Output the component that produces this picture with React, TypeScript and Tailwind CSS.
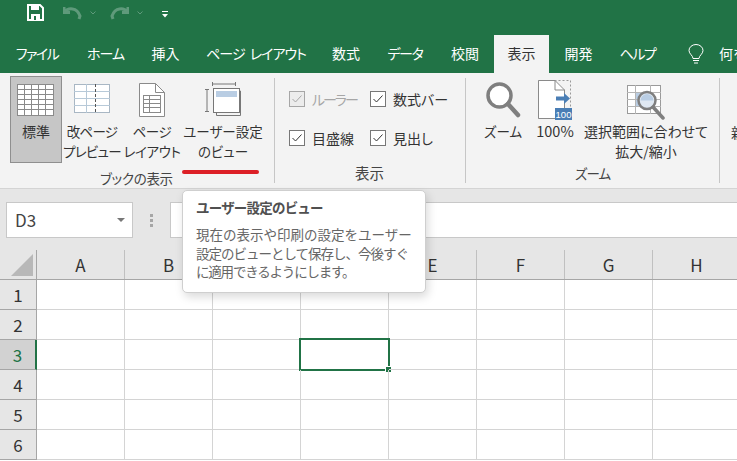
const tabs = [
  { label: "ファイル", w: "w-[74px] tracking-[-1.5px]" },
  { label: "ホーム", w: "w-[63px] tracking-[-1px]" },
  { label: "挿入", w: "w-[57px] text-[14.5px]" },
  { label: "ページ レイアウト", w: "w-[124px] tracking-[-1px] [word-spacing:3px]" },
  { label: "数式", w: "w-[56px] text-[14.5px]" },
  { label: "データ", w: "w-[62px] tracking-[-1.3px]" },
  { label: "校閲", w: "w-[58px] text-[14.5px]" },
  { label: "表示", w: "w-[55px] text-[14.5px]", active: true },
  { label: "開発", w: "w-[59px] text-[14.5px]" },
  { label: "ヘルプ", w: "w-[59px] tracking-[-1.5px]" },
];

const columns = ["A", "B", "C", "D", "E", "F", "G", "H"];
const rows = [1, 2, 3, 4, 5, 6];

const GridIcon = () => (
  <svg width="38" height="33" viewBox="0 0 38 33" fill="none">
    <rect x="0.5" y="0.5" width="36" height="31" fill="#fff" stroke="#8a8a8a" />
    {[5.5, 10.5, 15.5, 20.5, 25.5].map((y) => (
      <line key={y} x1="0" x2="37" y1={y} y2={y} stroke="#8a8a8a" />
    ))}
    {[7.5, 14.5, 21.5, 28.5].map((x) => (
      <line key={x} x1={x} x2={x} y1="0" y2="32" stroke="#8a8a8a" />
    ))}
  </svg>
);

const PageBreakIcon = () => (
  <svg width="37" height="31" viewBox="0 0 37 31" fill="none">
    <rect x="0.5" y="0.5" width="35" height="28" fill="#fff" stroke="#a9b7c4" />
    {[7.5, 14.5, 21.5].map((y) => (
      <line key={y} x1="0" x2="36" y1={y} y2={y} stroke="#b7c9d8" />
    ))}
    <line x1="12.5" x2="12.5" y1="0" y2="29" stroke="#b7c9d8" />
    <line x1="21.5" x2="21.5" y1="0" y2="29" stroke="#555" strokeDasharray="3 2" />
  </svg>
);

const PageLayoutIcon = () => (
  <svg width="26" height="34" viewBox="0 0 26 34" fill="none">
    <path d="M0.5 0.5H16.5L25.5 9.5V33.5H0.5Z" fill="#fff" stroke="#8a8a8a" />
    <path d="M16.5 0.5V9.5H25.5" stroke="#8a8a8a" />
    <rect x="4.5" y="12.5" width="17" height="17" stroke="#8a8a8a" />
    {[16.5, 20.5, 24.5].map((y) => (
      <line key={y} x1="4" x2="22" y1={y} y2={y} stroke="#8a8a8a" />
    ))}
    <line x1="10.5" x2="10.5" y1="12" y2="30" stroke="#8a8a8a" />
  </svg>
);

const CustomViewIcon = () => (
  <svg width="36" height="35" viewBox="0 0 36 35" fill="none">
    <path d="M7.5 0V4M30.5 0V4M7.5 2H30.5" stroke="#777" />
    <path d="M0 7.5H4M0 29.5H4M2 7.5V29.5" stroke="#777" />
    <rect x="8.5" y="6.5" width="26" height="24" fill="#fff" stroke="#777" />
    <path d="M11.5 31V33.5H35.5V9H35" stroke="#777" />
    <rect x="11" y="9" width="21" height="6" fill="#b9cde3" />
  </svg>
);

const MagnifierIcon = () => (
  <svg width="36" height="37" viewBox="0 0 36 37" fill="none">
    <circle cx="14.5" cy="14.5" r="11.5" fill="#fff" stroke="#7f7f7f" strokeWidth="3.5" />
    <line x1="23" y1="23" x2="33" y2="34" stroke="#7f7f7f" strokeWidth="4.5" strokeLinecap="round" />
  </svg>
);

const HundredIcon = () => (
  <svg width="34" height="40" viewBox="0 0 34 40" fill="none">
    <rect x="0.5" y="0.5" width="32" height="38" stroke="#999" strokeDasharray="2 2" />
    <path d="M0.5 0.5H17L26.5 10V38.5H0.5Z" fill="#fff" stroke="#8a8a8a" />
    <path d="M17 0.5V10H26.5" stroke="#8a8a8a" />
    <path d="M18 16.5H26V13L32 18.5L26 24V20.5H18Z" fill="#4a7eb5" />
    <rect x="17" y="28" width="17" height="12" fill="#4a7eb5" />
    <text x="25.5" y="37.5" textAnchor="middle" fontSize="9.5" fill="#fff" fontFamily="Liberation Sans, sans-serif">
      100
    </text>
  </svg>
);

const ZoomSelectionIcon = () => (
  <svg width="38" height="36" viewBox="0 0 38 36" fill="none">
    <rect x="0.5" y="0.5" width="33" height="28" fill="#fff" stroke="#9a9a9a" />
    <rect x="9" y="7" width="14" height="14" fill="#b9cde3" />
    {[7.5, 14.5, 21.5].map((y) => (
      <line key={y} x1="0" x2="34" y1={y} y2={y} stroke="#b5b5b5" />
    ))}
    {[8.5, 23.5].map((x) => (
      <line key={x} x1={x} x2={x} y1="0" y2="29" stroke="#b5b5b5" />
    ))}
    <circle cx="20" cy="15.5" r="8.5" fill="#dfe8f2" stroke="#7f7f7f" strokeWidth="2.5" />
    <path d="M13.5 15.5a6.5 6.5 0 0 1 13 0Z" fill="#b9cde3" />
    <line x1="26" y1="22" x2="36" y2="33" stroke="#7f7f7f" strokeWidth="3.5" strokeLinecap="round" />
  </svg>
);

const Check = ({ label, disabled }: { label: string; disabled?: boolean }) => (
  <div
    className={`flex items-center gap-[7px] text-[14px] leading-[20px] [font-feature-settings:'palt'] ${
      disabled ? "text-[#a6a6a6] tracking-[-2px]" : "text-[#333]"
    }`}
  >
    <svg width="16" height="16" viewBox="0 0 16 16" fill="none">
      <rect x="0.5" y="0.5" width="15" height="15" fill={disabled ? "#ececec" : "#fff"} stroke={disabled ? "#a6a6a6" : "#777"} />
      <path d="M3.5 8L6.5 11L12.5 4.5" stroke={disabled ? "#a6a6a6" : "#333"} />
    </svg>
    <span>{label}</span>
  </div>
);

const RibbonButton = ({
  lines,
  icon,
  className,
  textClass = "",
}: {
  lines: string[];
  icon: React.ReactNode;
  className: string;
  textClass?: string;
}) => (
  <div className={`flex flex-col items-center shrink-0 ${className}`}>
    <div className="h-[47px] flex items-center justify-center">{icon}</div>
    <div
      className={`text-[13.5px] leading-[20px] text-center whitespace-nowrap -mt-[2px] text-[#333] [font-feature-settings:'palt'] ${textClass}`}
    >
      {lines.map((l) => (
        <div key={l}>{l}</div>
      ))}
    </div>
  </div>
);

const GroupLabel = ({ children, className = "" }: { children: string; className?: string }) => (
  <div
    className={`absolute bottom-[1px] left-0 right-0 text-center leading-[18px] text-[#444] [font-feature-settings:'palt'] ${className}`}
  >
    {children}
  </div>
);

export default function App() {
  return (
    <div
      className="relative w-[737px] h-[461px] overflow-hidden bg-white flex flex-col"
      style={{ fontFamily: '"Noto Sans CJK JP", "Noto Sans", sans-serif' }}
    >
      {/* title + tabs */}
      <div className="bg-[#217346] h-[73px] shrink-0 flex flex-col">
        <div className="h-[35px] flex items-start pt-[4px] pl-[27px]">
          <svg width="17" height="17" viewBox="0 0 17 17" fill="none">
            <path d="M1 1H13L16 4V16H1Z" stroke="#fff" strokeWidth="2" />
            <rect x="4" y="1" width="8" height="5" fill="#fff" />
            <rect x="4" y="10" width="9" height="6" fill="#fff" />
            <rect x="7" y="12" width="2" height="4" fill="#217346" />
          </svg>
          <svg className="ml-[19px] mt-[2px]" width="19" height="14" viewBox="0 0 19 14" fill="none">
            <path d="M1 1V6.5H7M1.5 6C5 1.5 14 1 17 10L16 13" stroke="#5f9a7b" strokeWidth="3" />
          </svg>
          <svg className="ml-[8px] mt-[7px]" width="6" height="4" viewBox="0 0 6 4" fill="none">
            <path d="M0.5 0.5L3 3L5.5 0.5" stroke="#5f9a7b" />
          </svg>
          <svg className="ml-[14px] mt-[2px]" width="19" height="14" viewBox="0 0 19 14" fill="none">
            <path d="M18 1V6.5H12M17.5 6C14 1.5 5 1 2 10L3 13" stroke="#5f9a7b" strokeWidth="3" />
          </svg>
          <svg className="ml-[8px] mt-[7px]" width="6" height="4" viewBox="0 0 6 4" fill="none">
            <path d="M0.5 0.5L3 3L5.5 0.5" stroke="#5f9a7b" />
          </svg>
          <svg className="ml-[19px] mt-[7px]" width="6" height="7" viewBox="0 0 6 7" fill="none">
            <path d="M0 0.5H6" stroke="#fff" />
            <path d="M0 3H6L3 6.5Z" fill="#fff" />
          </svg>
        </div>
        <div className="flex h-[38px] items-stretch">
          {tabs.map((t) => (
            <div
              key={t.label}
              className={`${t.w} shrink-0 flex items-center justify-center pb-[2px] text-[14px] whitespace-nowrap [font-feature-settings:'palt'] ${
                t.active ? "bg-[#f3f3f3] text-[#333]" : "text-white"
              }`}
            >
              {t.label}
            </div>
          ))}
          <div className="ml-[21px] flex items-center shrink-0">
            <svg width="16" height="20" viewBox="0 0 16 20" fill="none">
              <path d="M5 14.5C5 11.5 1 10 1 6.5A7 6 0 0 1 15 6.5C15 10 11 11.5 11 14.5Z" stroke="#fff" />
              <path d="M5 16.5H11M6 19H10" stroke="#fff" />
            </svg>
          </div>
          <div className="ml-[15px] flex items-center pb-[2px] text-white text-[14px] whitespace-nowrap">何を</div>
        </div>
      </div>

      {/* ribbon */}
      <div className="bg-[#f3f3f3] h-[116px] shrink-0 flex border-b border-[#d4d4d4] pt-[3px]">
        <div className="relative w-[274px] shrink-0 flex items-start pl-[10px]">
          <div className="w-[52px] h-[87px] shrink-0 bg-[#c6c6c6] border border-[#8f8f8f] flex flex-col items-center">
            <div className="h-[40px] flex items-end justify-center">
              <GridIcon />
            </div>
            <div className="text-[14px] leading-[20px] mt-[4px] text-[#333]">標準</div>
          </div>
          <RibbonButton
            lines={["改ページ", "プレビュー"]}
            icon={<PageBreakIcon />}
            className="w-[58px] ml-[1px]"
            textClass="tracking-[-0.7px]"
          />
          <RibbonButton
            lines={["ページ", "レイアウト"]}
            icon={<PageLayoutIcon />}
            className="w-[62px]"
            textClass="tracking-[-0.4px]"
          />
          <RibbonButton lines={["ユーザー設定", "のビュー"]} icon={<CustomViewIcon />} className="w-[80px]" />
          <div className="absolute bottom-[1px] left-[100px] text-[13.5px] tracking-[-0.3px] leading-[18px] text-[#444] [font-feature-settings:'palt']">
            ブックの表示
          </div>
          <div className="absolute left-[182px] top-[94px] w-[77px] h-[4px] rounded-full bg-[#dc1f26]" />
        </div>

        <div className="relative w-[191px] shrink-0 border-l border-[#c6c6c6] mt-[2px] mb-[5px]">
          <div className="grid grid-cols-[81px_auto] gap-y-[19px] pl-[14px] pt-[11px]">
            <Check label="ルーラー" disabled />
            <Check label="数式バー" />
            <Check label="目盛線" />
            <Check label="見出し" />
          </div>
          <GroupLabel className="text-[14.5px] -ml-[1px]">表示</GroupLabel>
        </div>

        <div className="relative w-[254px] shrink-0 border-l border-[#c6c6c6] mt-[2px] mb-[5px] flex items-start pl-[13px]">
          <RibbonButton lines={["ズーム"]} icon={<MagnifierIcon />} className="w-[48px] -mt-[2px]" />
          <RibbonButton lines={["100%"]} icon={<HundredIcon />} className="w-[50px] ml-[3px] -mt-[2px]" textClass="text-[14.5px]" />
          <RibbonButton
            lines={["選択範囲に合わせて", "拡大/縮小"]}
            icon={
              <div className="pt-[6px]">
                <ZoomSelectionIcon />
              </div>
            }
            className="w-[124px] ml-[4px] -mt-[2px]"
            textClass="text-[14px]"
          />
          <GroupLabel className="text-[13.5px] tracking-[-1px]">ズーム</GroupLabel>
        </div>

        <div className="border-l border-[#c6c6c6] mt-[2px] mb-[5px] pl-[11px] pt-[44px] text-[13.5px] text-[#333] whitespace-nowrap">
          新しい
        </div>
      </div>

      {/* formula bar */}
      <div className="bg-[#e6e6e6] h-[61px] shrink-0 flex items-start pt-[13px] pl-[6px]">
        <div className="w-[127px] h-[36px] shrink-0 bg-white border border-[#c8c8c8] flex items-center justify-between pl-[8px] pr-[7px] text-[#444] text-[17px]">
          <span>D3</span>
          <svg width="8" height="4" viewBox="0 0 8 4">
            <path d="M0 0H8L4 4Z" fill="#777" />
          </svg>
        </div>
        <div className="w-[37px] h-[36px] shrink-0 flex flex-col items-center justify-center gap-[2px]">
          <div className="w-[3px] h-[3px] bg-[#a6a6a6]" />
          <div className="w-[3px] h-[3px] bg-[#a6a6a6]" />
          <div className="w-[3px] h-[3px] bg-[#a6a6a6]" />
        </div>
        <div className="flex-1 h-[36px] bg-white border border-[#c8c8c8] border-r-0" />
      </div>

      {/* sheet */}
      <div className="flex h-[30px] shrink-0 bg-[#e6e6e6] border-b border-[#a6a6a6]">
        <div className="w-[37px] shrink-0 border-r border-[#a6a6a6] flex items-end justify-end pr-[3px] pb-[3px]">
          <svg width="22" height="22" viewBox="0 0 22 22">
            <path d="M22 0V22H0Z" fill="#b8b8b8" />
          </svg>
        </div>
        {columns.map((c) => (
          <div
            key={c}
            className="w-[88px] shrink-0 border-r border-[#c0c0c0] flex items-center justify-center text-[17px] text-[#333]"
          >
            {c}
          </div>
        ))}
      </div>
      {rows.map((r) => (
        <div key={r} className="flex h-[30px] shrink-0">
          <div
            className={`w-[37px] shrink-0 flex items-center justify-center text-[17px] border-b border-[#a6a6a6] ${
              r === 3
                ? "bg-[#d2d2d2] text-[#217346] border-r-2 border-r-[#217346]"
                : "bg-[#e6e6e6] text-[#333] border-r border-r-[#a6a6a6]"
            }`}
          >
            {r}
          </div>
          {columns.map((c) => (
            <div key={c} className="relative w-[88px] shrink-0 border-r border-b border-[#d4d4d4]">
              {c === "D" && r === 3 && (
                <div className="absolute -top-[2px] -left-[2px] w-[91px] h-[33px] border-2 border-[#217346]">
                  <div className="absolute -right-[3px] -bottom-[3px] w-[5px] h-[5px] bg-[#217346] outline outline-1 outline-white" />
                </div>
              )}
            </div>
          ))}
        </div>
      ))}

      {/* tooltip */}
      <div className="absolute left-[182px] top-[190px] w-[244px] h-[103px] bg-white rounded-[5px] border border-[#cfcfcf] shadow-[2px_4px_10px_rgba(0,0,0,0.15)] pl-[13px] pt-[6px]">
        <div className="text-[13.5px] tracking-[-0.8px] leading-[20px] font-bold text-[#505050]">ユーザー設定のビュー</div>
        <div className="mt-[8px] text-[13.5px] leading-[18.5px] text-[#666] whitespace-nowrap">
          <div>現在の表示や印刷の設定をユーザー</div>
          <div className="tracking-[-1px]">設定のビューとして保存し、今後すぐ</div>
          <div className="tracking-[-1.2px]">に適用できるようにします。</div>
        </div>
      </div>
    </div>
  );
}
